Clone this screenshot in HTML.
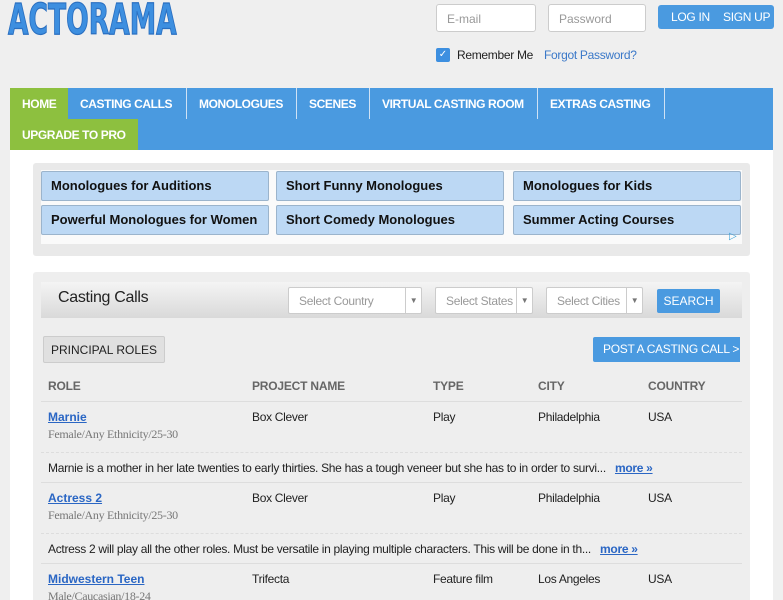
<!DOCTYPE html>
<html><head><style>
*{margin:0;padding:0;box-sizing:border-box}
html,body{width:783px;height:600px;overflow:hidden}
body{background:#efefef;font-family:"Liberation Sans",Arial,sans-serif;position:relative;color:#222}
.a{position:absolute;white-space:nowrap}
.logo{left:8px;top:-4px;font-size:36px;font-weight:bold;color:#3d8fe0;transform:scale(0.82,1.18);transform-origin:0 0;font-family:"DejaVu Sans Condensed","Liberation Sans",sans-serif;-webkit-text-stroke:1px #2a6fc0}
.inp{background:#fff;border:1px solid #ccc;border-radius:3px;height:28px;font-size:12px;color:#999;padding:7px 10px}
.nav{left:10px;top:88px;width:763px;height:62px;background:#4a9ae0}
.ni{position:absolute;color:#fff;font-weight:bold;font-size:12px;height:31px;line-height:33px;padding:0 0 0 12px;border-right:1px solid #cfe2f5;letter-spacing:-.4px}
.ad{left:33px;top:163px;width:717px;height:93px;background:#e9e9e9;border-radius:3px}
.adin{left:41px;top:170px;width:701px;height:74px;background:#fafafa}
.ab{position:absolute;width:228px;height:30px;background:#bcd8f4;border:1px solid #9bb4cc;border-radius:2px;font-weight:bold;font-size:13px;line-height:28px;padding-left:9px;color:#111}
.cs{left:33px;top:272px;width:717px;height:340px;background:#eeeeee;border-radius:3px}
.hb{left:41px;top:282px;width:701px;height:36px;background:linear-gradient(#f4f4f4,#d9d9d9)}
.sel{position:absolute;top:287px;height:27px;background:#fff;border:1px solid #ccc;border-radius:2px;font-size:12px;color:#999;padding:6px 10px;letter-spacing:-.3px}
.sel i{position:absolute;right:0;top:0;width:16px;height:25px;border-left:1px solid #ccc;font-style:normal;font-size:8px;color:#777;text-align:center;line-height:25px}
.t{font-size:12px;letter-spacing:-.3px}
.h{font-size:12px;color:#666;font-weight:bold;letter-spacing:-.2px}
.lk{color:#2a66c4;font-weight:bold;text-decoration:underline;font-size:12px}
.sub{font-family:"Liberation Serif",serif;font-size:12px;color:#777;letter-spacing:-.3px}
.ln{position:absolute;left:41px;width:701px;height:0;border-top:1px dashed #ddd}
</style></head><body>
<div class="a logo">ACTORAMA</div>
<div class="a inp" style="left:436px;top:4px;width:100px">E-mail</div>
<div class="a inp" style="left:548px;top:4px;width:98px">Password</div>
<div class="a" style="left:658px;top:5px;width:116px;height:24px;background:#4a9ae0;border-radius:3px;color:#fff;font-size:12px;line-height:24px;letter-spacing:-.3px"><span style="position:absolute;left:13px">LOG IN</span><span style="position:absolute;left:65px">SIGN UP</span></div>
<div class="a" style="left:436px;top:48px;width:14px;height:14px;background:#3d8fe0;border-radius:2px;color:#fff;font-size:10px;text-align:center;line-height:14px">✓</div>
<div class="a t" style="left:457px;top:48px;color:#222">Remember Me</div>
<div class="a t" style="left:544px;top:48px;color:#3a78c8">Forgot Password?</div>
<div class="a nav">
<div class="ni" style="left:0;top:0;background:#8dc03f;border:none;width:58px">HOME</div>
<div class="ni" style="left:58px;top:0;width:119px">CASTING CALLS</div>
<div class="ni" style="left:177px;top:0;width:110px">MONOLOGUES</div>
<div class="ni" style="left:287px;top:0;width:73px">SCENES</div>
<div class="ni" style="left:360px;top:0;width:168px">VIRTUAL CASTING ROOM</div>
<div class="ni" style="left:528px;top:0;width:127px">EXTRAS CASTING</div>
<div class="ni" style="left:0;top:31px;background:#8dc03f;border:none;width:128px">UPGRADE TO PRO</div>
</div>
<div class="a" style="left:10px;top:150px;width:763px;height:450px;background:#fff"></div>
<div class="a ad"></div><div class="a adin"></div>
<div class="ab" style="left:41px;top:171px">Monologues for Auditions</div>
<div class="ab" style="left:276px;top:171px">Short Funny Monologues</div>
<div class="ab" style="left:513px;top:171px">Monologues for Kids</div>
<div class="ab" style="left:41px;top:205px">Powerful Monologues for Women</div>
<div class="ab" style="left:276px;top:205px">Short Comedy Monologues</div>
<div class="ab" style="left:513px;top:205px">Summer Acting Courses</div>
<div class="a" style="left:729px;top:231px;color:#3aa0d8;font-size:10px">▷</div>
<div class="a cs"></div><div class="a hb"></div>
<div class="a" style="left:58px;top:289px;font-size:16px;color:#222;letter-spacing:-.3px">Casting Calls</div>
<div class="sel" style="left:288px;width:134px">Select Country<i>▼</i></div>
<div class="sel" style="left:435px;width:98px">Select States<i>▼</i></div>
<div class="sel" style="left:546px;width:97px">Select Cities<i>▼</i></div>
<div class="a" style="left:657px;top:289px;width:63px;height:24px;background:#4a9ae0;border-radius:2px;color:#fff;font-size:12px;text-align:center;line-height:24px">SEARCH</div>
<div class="a" style="left:43px;top:336px;width:122px;height:27px;background:#e0e0e0;border:1px solid #ccc;border-radius:2px;font-size:12px;line-height:26px;text-align:center;color:#222">PRINCIPAL ROLES</div>
<div class="a" style="left:593px;top:337px;width:147px;height:25px;background:#4a9ae0;border-radius:2px 0 0 2px;color:#fff;font-size:12px;line-height:25px;padding-left:10px;overflow:hidden;letter-spacing:-.3px">POST A CASTING CALL &gt;</div>
<div class="a h" style="left:48px;top:379px">ROLE</div>
<div class="a h" style="left:252px;top:379px">PROJECT NAME</div>
<div class="a h" style="left:433px;top:379px">TYPE</div>
<div class="a h" style="left:538px;top:379px">CITY</div>
<div class="a h" style="left:648px;top:379px">COUNTRY</div>
<div class="ln" style="top:401px;border-top:1px solid #ddd"></div>

<div class="a lk" style="left:48px;top:410px">Marnie</div>
<div class="a sub" style="left:48px;top:427px">Female/Any Ethnicity/25-30</div>
<div class="a t" style="left:252px;top:410px">Box Clever</div>
<div class="a t" style="left:433px;top:410px">Play</div>
<div class="a t" style="left:538px;top:410px">Philadelphia</div>
<div class="a t" style="left:648px;top:410px">USA</div>
<div class="ln" style="top:452px"></div>
<div class="a t" style="left:48px;top:461px">Marnie is a mother in her late twenties to early thirties. She has a tough veneer but she has to in order to survi... &nbsp; <span class="lk">more »</span></div>
<div class="ln" style="top:482px;border-top:1px solid #ddd"></div>

<div class="a lk" style="left:48px;top:491px">Actress 2</div>
<div class="a sub" style="left:48px;top:508px">Female/Any Ethnicity/25-30</div>
<div class="a t" style="left:252px;top:491px">Box Clever</div>
<div class="a t" style="left:433px;top:491px">Play</div>
<div class="a t" style="left:538px;top:491px">Philadelphia</div>
<div class="a t" style="left:648px;top:491px">USA</div>
<div class="ln" style="top:533px"></div>
<div class="a t" style="left:48px;top:542px">Actress 2 will play all the other roles. Must be versatile in playing multiple characters. This will be done in th... &nbsp; <span class="lk">more »</span></div>
<div class="ln" style="top:563px;border-top:1px solid #ddd"></div>

<div class="a lk" style="left:48px;top:572px">Midwestern Teen</div>
<div class="a sub" style="left:48px;top:589px">Male/Caucasian/18-24</div>
<div class="a t" style="left:252px;top:572px">Trifecta</div>
<div class="a t" style="left:433px;top:572px">Feature film</div>
<div class="a t" style="left:538px;top:572px">Los Angeles</div>
<div class="a t" style="left:648px;top:572px">USA</div>
</body></html>
